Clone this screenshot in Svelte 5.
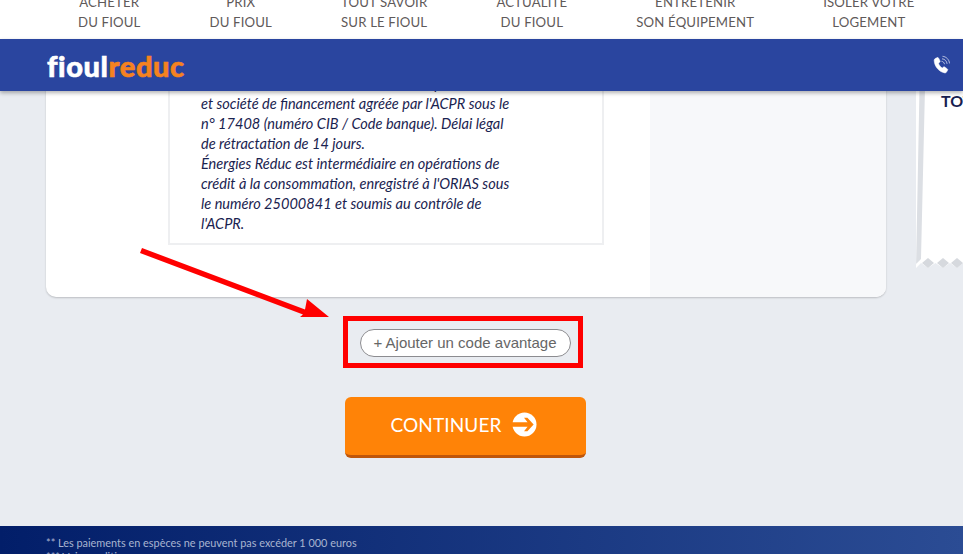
<script>
  const menu = [
    ['ACHETER', 'DU FIOUL'],
    ['PRIX', 'DU FIOUL'],
    ['TOUT SAVOIR', 'SUR LE FIOUL'],
    ['ACTUALITÉ', 'DU FIOUL'],
    ['ENTRETENIR', 'SON ÉQUIPEMENT'],
    ['ISOLER VOTRE', 'LOGEMENT'],
  ];
</script>

<div class="page">
  <nav class="menu">
    {#each menu as item}
      <a href="#top">{item[0]}<br />{item[1]}</a>
    {/each}
  </nav>

  <header class="bar">
    <div class="logo">fioul<span>reduc</span></div>
    <svg class="phone" viewBox="0 0 20 20" width="20" height="20">
      <path fill="#fff" stroke="#fff" stroke-width=".6" d="M4.200 3.600 6.400 2.600c.5-.2.9 0 1.100.4l1.500 3c.2.4.1.8-.2 1.100L7.500 8.200c.5 1.900 2 3.900 3.800 4.900l1.200-1c.3-.3.8-.3 1.100-.1l2.700 1.900c.4.300.5.700.3 1.100l-1.100 2.100c-.3.600-.9.900-1.600.8C8.200 17 3.300 11.500 3.200 5.300c0-.8.400-1.400 1-1.700Z" />
      <path fill="none" stroke="#d5dbee" stroke-width=".8" d="M10.500 6.300c1.500.1 2.800 1.300 3 2.900M11 3.800c2.800.2 4.800 2.300 5.100 5.100M11.500 1.300c3.800.3 6.700 3.300 7 7.100" />
    </svg>
  </header>

  <main class="main">
    <div class="cols">
      <section class="card">
        <div class="left">
          <div class="legal">
            Floa est un établissement de crédit, de paiement, <br />
            et société de financement agréée par l'ACPR sous le<br />
            n° 17408 (numéro CIB / Code banque). Délai légal<br />
            de rétractation de 14 jours.<br />
            Énergies Réduc est intermédiaire en opérations de<br />
            crédit à la consommation, enregistré à l'ORIAS sous<br />
            le numéro 25000841 et soumis au contrôle de<br />
            l'ACPR.
          </div>
        </div>
        <div class="side"></div>
      </section>

      <aside class="ticket">
        <svg class="ticket-edge" viewBox="0 0 47 180" width="47" height="180">
          <path fill="#dcdfe4" d="M3.500 0H9L5 171 0 176V180H0Z" />
          <path fill="#e9ecf1" d="M0 180 5 175 12 180H0ZM12 180l7.500-5 7.500 5ZM27 180l7-5 7 5ZM41 180l6-5v5Z" />
          <path fill="#d6d9de" d="M6 175l6-5 6 5-6 5ZM21 175l6-5 6 5-6 5ZM35 175l6-5 6 5-6 5Z" />
        </svg>
        <strong>TOTAL</strong>
      </aside>
    </div>

    <div class="actions">
      <button class="code">+ Ajouter un code avantage</button>
      <button class="continue">
        CONTINUER
        <svg viewBox="0 0 26 26" width="25" height="25">
          <circle cx="13" cy="13" r="12.500" fill="#fff" />
          <path fill="#ff8307" d="M12.500 6h3.500L22.500 13 16 20h-3.500l3.700-4.700H0v-4.600h16.200Z" />
        </svg>
      </button>
    </div>

    <svg class="mark" viewBox="0 0 460 130" width="460" height="130">
      <path fill="#f00" d="M1 3 3-2 166 59.500 168 49 190 67H161L164 64.500Z" />
      <rect x="206.500" y="68.500" width="235" height="47" fill="none" stroke="#f00" stroke-width="5" />
    </svg>
  </main>

  <footer class="foot">
    <p>** Les paiements en espèces ne peuvent pas excéder 1 000 euros</p>
    <p>*** Voir conditions</p>
  </footer>
</div>

<style>
  :global(body) {
    margin: 0;
  }

  .page {
    height: 554px;
    overflow: hidden;
    display: flex;
    flex-direction: column;
    font-family: Lato, "Open Sans", sans-serif;
    background: #e9ecf1;
  }

  .menu {
    height: 39px;
    flex: none;
    box-sizing: border-box;
    display: flex;
    align-items: flex-end;
    gap: 69px;
    padding: 0 0 7px 78px;
    background: #fff;
    overflow: hidden;
  }

  .menu a {
    color: #5f5a5a;
    font-size: 13.200px;
    line-height: 20px;
    letter-spacing: 0.15px;
    text-align: center;
    text-decoration: none;
    white-space: nowrap;
  }

  .bar {
    height: 52px;
    flex: none;
    display: flex;
    align-items: center;
    justify-content: space-between;
    padding: 0 12px 0 47px;
    background: #2a459f;
    box-shadow: 0 2px 4px rgba(0, 0, 0, 0.3);
    position: relative;
    z-index: 2;
  }

  .logo {
    color: #fff;
    font-size: 29px;
    font-weight: 900;
    line-height: 1;
    letter-spacing: 0.6px;
    -webkit-text-stroke: 0.6px currentColor;
  }

  .logo span {
    color: #f58220;
  }

  .main {
    flex: 1;
    min-height: 0;
    display: flex;
    flex-direction: column;
    justify-content: flex-end;
    padding: 0 0 68px 46px;
    overflow: hidden;
    position: relative;
  }

  .cols {
    display: flex;
    gap: 30px;
  }

  .card {
    width: 840px;
    flex: none;
    display: flex;
    background: #fff;
    border-radius: 0 0 10px 10px;
    box-shadow: 0 1px 2px rgba(0, 0, 0, 0.2);
    overflow: hidden;
  }

  .left {
    flex: 1;
    padding: 0 46px 52px 122px;
  }

  .legal {
    box-sizing: border-box;
    border: 2px solid #eeeff1;
    border-top: 0;
    padding: 0 10px 9px 31px;
    color: #1a2350;
    font-size: 14.550px;
    font-style: italic;
    line-height: 20px;
    white-space: nowrap;
  }

  .side {
    width: 236px;
    flex: none;
    background: #f7f8fa;
  }

  .ticket {
    flex: 1;
    margin-bottom: 29px;
    padding: 0 0 157px 25px;
    display: flex;
    flex-direction: column;
    justify-content: flex-end;
    background: #fff;
    position: relative;
    overflow: hidden;
  }

  .ticket strong {
    color: #17204f;
    font-size: 16px;
    line-height: 20px;
  }

  .ticket-edge {
    position: absolute;
    left: 0;
    bottom: 0;
  }

  .actions {
    width: 838px;
    display: flex;
    flex-direction: column;
    align-items: center;
    gap: 40px;
    margin-top: 32px;
  }

  .code {
    width: 211px;
    height: 28px;
    padding: 0 0 2px;
    border: 1px solid #8c8c90;
    border-radius: 14px;
    background: #fff;
    color: #666;
    font-family: "Liberation Sans", Arial, sans-serif;
    font-size: 15px;
  }

  .continue {
    width: 241px;
    height: 61px;
    display: flex;
    align-items: center;
    justify-content: center;
    gap: 11px;
    padding: 0 2px 4px 0;
    border: 0;
    border-bottom: 3px solid #bf560a;
    border-radius: 6px;
    background: #ff8307;
    color: #fff;
    font-family: Lato, sans-serif;
    font-size: 19px;
    letter-spacing: 0.1px;
  }

  .mark {
    position: absolute;
    left: 139px;
    top: 159px;
    overflow: visible;
    pointer-events: none;
  }

  .foot {
    height: 28px;
    flex: none;
    box-sizing: border-box;
    padding: 11px 0 0 46px;
    overflow: hidden;
    background: linear-gradient(90deg, #021e69, #2b4c94);
    color: #a8b4d0;
    font-size: 10.900px;
    line-height: 12px;
  }

  .foot p {
    margin: 0 0 2px;
  }
</style>
